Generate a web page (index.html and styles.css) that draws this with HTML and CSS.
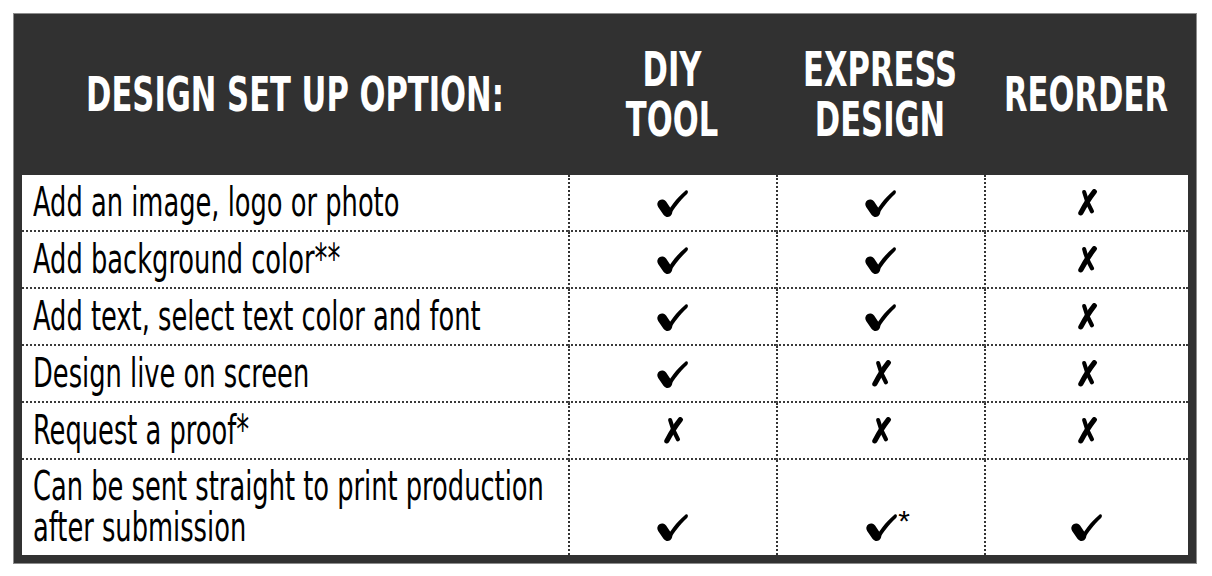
FILE: index.html
```html
<!DOCTYPE html>
<html>
<head>
<meta charset="utf-8">
<link rel="stylesheet" href="styles.css">
</head>
<body>
<svg class="defs" width="0" height="0" aria-hidden="true">
  <symbol id="chk" viewBox="0 0 30 26">
    <path d="M4.8 14.2 L9.8 21.6" stroke="#000" stroke-width="9" stroke-linecap="round" fill="none"/>
    <path d="M7.8 24.8 C12 17 18 8.5 26.6 1.4 C28.6 0.4 29.8 2.6 28.4 4.3 C21 11.5 16 18 12.8 23.8 Z" fill="#000"/>
  </symbol>
  <symbol id="crs" viewBox="0 0 20 26">
    <path d="M6.8 3 Q9.2 13 14.3 21.5" stroke="#000" stroke-width="4" stroke-linecap="round" fill="none"/>
    <path d="M16.6 2.6 Q10 11 3.6 23" stroke="#000" stroke-width="5" stroke-linecap="round" fill="none"/>
  </symbol>
</svg>
<div class="chart">
  <div class="row head">
    <div class="hcell"><span class="htxt">DESIGN SET UP OPTION:</span></div>
    <div class="hcell"><span class="hstack"><span class="htxt">DIY</span><span class="htxt">TOOL</span></span></div>
    <div class="hcell"><span class="hstack"><span class="htxt">EXPRESS</span><span class="htxt">DESIGN</span></span></div>
    <div class="hcell"><span class="htxt">REORDER</span></div>
  </div>
  <div class="row">
    <div class="cell label"><span class="txt">Add an image, logo or photo</span></div>
    <div class="cell mark"><svg class="yes"><use href="#chk"/></svg></div>
    <div class="cell mark"><svg class="yes"><use href="#chk"/></svg></div>
    <div class="cell mark"><svg class="no"><use href="#crs"/></svg></div>
  </div>
  <div class="row">
    <div class="cell label"><span class="txt">Add background color**</span></div>
    <div class="cell mark"><svg class="yes"><use href="#chk"/></svg></div>
    <div class="cell mark"><svg class="yes"><use href="#chk"/></svg></div>
    <div class="cell mark"><svg class="no"><use href="#crs"/></svg></div>
  </div>
  <div class="row">
    <div class="cell label"><span class="txt">Add text, select text color and font</span></div>
    <div class="cell mark"><svg class="yes"><use href="#chk"/></svg></div>
    <div class="cell mark"><svg class="yes"><use href="#chk"/></svg></div>
    <div class="cell mark"><svg class="no"><use href="#crs"/></svg></div>
  </div>
  <div class="row">
    <div class="cell label"><span class="txt">Design live on screen</span></div>
    <div class="cell mark"><svg class="yes"><use href="#chk"/></svg></div>
    <div class="cell mark"><svg class="no"><use href="#crs"/></svg></div>
    <div class="cell mark"><svg class="no"><use href="#crs"/></svg></div>
  </div>
  <div class="row">
    <div class="cell label"><span class="txt">Request a proof*</span></div>
    <div class="cell mark"><svg class="no"><use href="#crs"/></svg></div>
    <div class="cell mark"><svg class="no"><use href="#crs"/></svg></div>
    <div class="cell mark"><svg class="no"><use href="#crs"/></svg></div>
  </div>
  <div class="row last">
    <div class="cell label"><span class="stack"><span class="txt">Can be sent straight to print production</span><span class="txt">after submission</span></span></div>
    <div class="cell mark"><svg class="yes"><use href="#chk"/></svg></div>
    <div class="cell mark"><span class="pair"><svg class="yes"><use href="#chk"/></svg><span class="star">*</span></span></div>
    <div class="cell mark"><svg class="yes"><use href="#chk"/></svg></div>
  </div>
</div>
</body>
</html>
```
FILE: styles.css
```css
body {
  margin: 13px;
  background: #ffffff;
}

.defs {
  position: absolute;
  width: 0;
  height: 0;
}

.chart {
  width: 1184px;
  box-sizing: border-box;
  border: 1px solid #8c8c8c;
  background: #313131;
  padding: 0 8px 8px;
  font-family: "DejaVu Sans Condensed", "DejaVu Sans", sans-serif;
}

.row {
  display: grid;
  grid-template-columns: 546px 208px 208px 204px;
  background: #ffffff;
  height: 57px;
}

.row.head {
  background: #313131;
  height: 161px;
  color: #ffffff;
}

.hcell {
  display: flex;
  align-items: center;
  justify-content: center;
  text-align: center;
}

.hstack {
  display: flex;
  flex-direction: column;
  align-items: center;
  gap: 25px;
}

.htxt {
  display: inline-block;
  font-weight: bold;
  font-size: 34px;
  line-height: 25px;
  white-space: nowrap;
  transform: scaleY(1.41);
}

.cell {
  box-sizing: border-box;
  border-bottom: 2px dotted #3a3a3a;
  display: flex;
  align-items: center;
  color: #000000;
}

.row.last {
  height: 95px;
}

.row.last .cell {
  border-bottom: none;
}

.label {
  padding-left: 11px;
}

.stack {
  display: flex;
  flex-direction: column;
  gap: 18px;
  margin-top: -2px;
}

.txt {
  display: inline-block;
  font-size: 28.6px;
  line-height: 23px;
  white-space: nowrap;
  transform: scaleY(1.4);
}

.mark {
  border-left: 2px dotted #333333;
  justify-content: center;
}

.row.last .mark {
  align-items: flex-end;
  padding-bottom: 14px;
}

.yes {
  width: 32px;
  height: 28px;
}

.no {
  width: 21px;
  height: 27px;
}

.pair {
  display: flex;
  align-items: flex-start;
  margin-left: 14px;
}

.star {
  font-family: "Liberation Sans", sans-serif;
  font-size: 30px;
  line-height: 20px;
  margin-left: 0;
  margin-top: -2px;
}
```
